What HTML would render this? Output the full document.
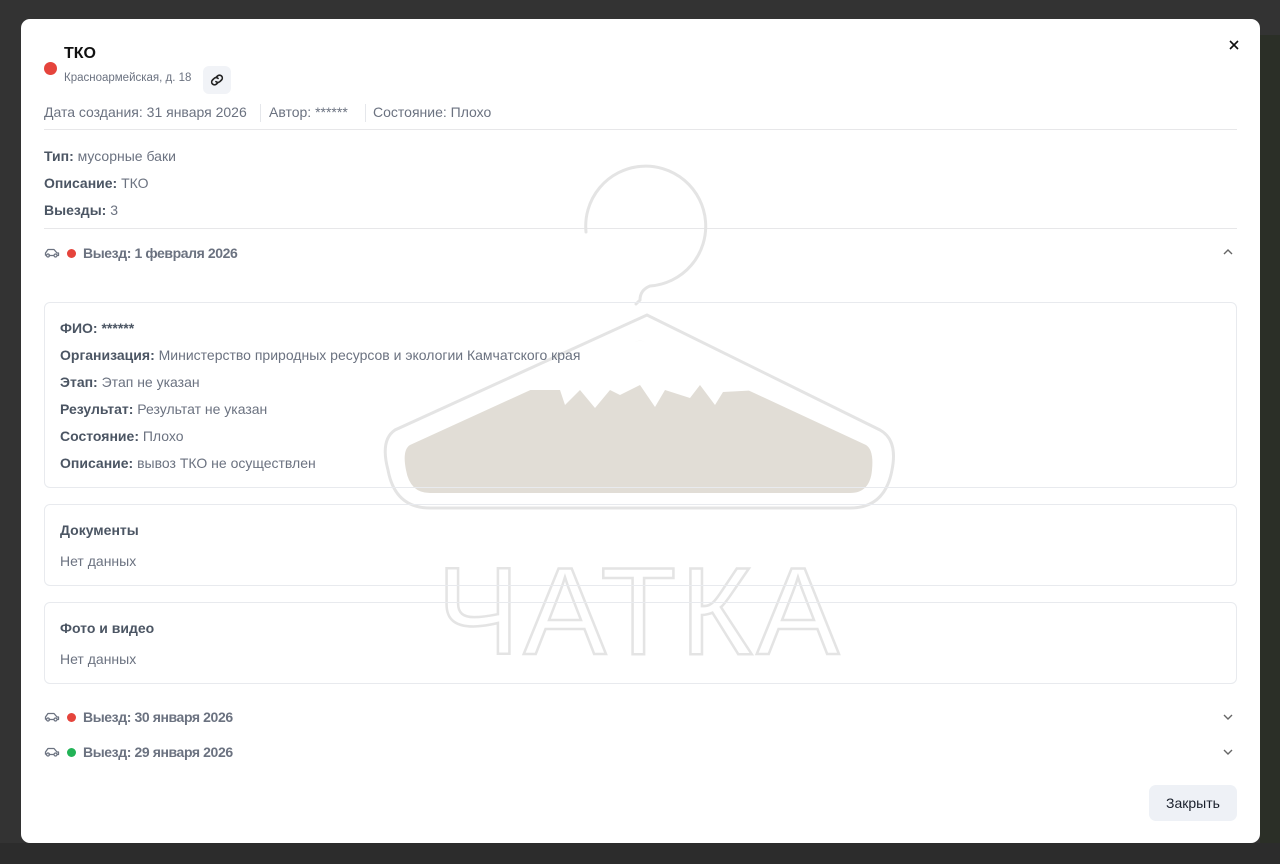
<!DOCTYPE html>
<html><head><meta charset="utf-8"><style>
*{margin:0;padding:0;box-sizing:border-box}
body{width:1280px;height:864px;background:#333;position:relative;overflow:hidden;font-family:"Liberation Sans",Arial,sans-serif;color:#6b7280;font-size:14px}
.a{position:absolute;white-space:nowrap}
.modal{position:absolute;left:21px;top:19px;width:1239px;height:824px;background:#fff;border-radius:9px;overflow:hidden}
b{color:#4b5563;font-weight:bold}
.v{color:#6b7280;font-weight:bold;letter-spacing:-0.4px}
.card{position:absolute;left:23px;width:1193px;border:1px solid #e8eaee;border-radius:6px}
.hr{position:absolute;left:23px;width:1193px;height:1px;background:#e7e7e9}
.dot{position:absolute;width:9px;height:9px;border-radius:50%}
</style></head><body>
<div style="position:absolute;left:1260px;top:35px;width:20px;height:829px;background:#2b2f27"></div>
<div style="position:absolute;left:0;top:843px;width:1280px;height:21px;background:#2c2c2c"></div>
<div class="modal">
<div class="dot" style="left:23px;top:43px;width:13px;height:13px;background:#e5443c"></div>
<div class="a" style="left:43px;top:26px;font-size:16px;font-weight:bold;color:#111">ТКО</div>
<div class="a" style="left:43px;top:53px;font-size:11.5px;color:#6b7280">Красноармейская, д. 18</div>
<div class="a" style="left:182px;top:47px;width:28px;height:28px;background:#f1f3f7;border-radius:6px">
<svg width="28" height="28" viewBox="0 0 28 28"><g fill="none" stroke="#222" stroke-width="1.6" stroke-linecap="round"><path d="M13 11.5l1.5-1.5a2.8 2.8 0 0 1 4 4l-1.6 1.6a2.8 2.8 0 0 1-4 0"/><path d="M15 16.5l-1.5 1.5a2.8 2.8 0 0 1-4-4l1.6-1.6a2.8 2.8 0 0 1 4 0"/></g></svg></div>
<div class="a" style="left:23px;top:85px">Дата создания: 31 января 2026</div>
<div class="a" style="left:239px;top:85px;width:1px;height:18px;background:#e5e7eb"></div>
<div class="a" style="left:248px;top:85px">Автор: ******</div>
<div class="a" style="left:344px;top:85px;width:1px;height:18px;background:#e5e7eb"></div>
<div class="a" style="left:352px;top:85px">Состояние: Плохо</div>
<div class="hr" style="top:110px"></div>
<div class="a" style="left:23px;top:129px"><b>Тип:</b> мусорные баки</div>
<div class="a" style="left:23px;top:156px"><b>Описание:</b> ТКО</div>
<div class="a" style="left:23px;top:183px"><b>Выезды:</b> 3</div>
<div class="hr" style="top:209px"></div>

<svg class="a" style="left:0;top:0" width="1239" height="824" viewBox="21 19 1239 824">
<g fill="none" stroke="#e4e4e4" stroke-width="3" stroke-linecap="round">
<path d="M586 232 A60 60 0 1 1 650 286 Q640 290 640 300 L636 304"/>
<path d="M647 315 L395 430 Q380 440 388 470 Q395 508 430 508 L850 508 Q885 508 892 470 Q898 440 880 430 Z"/>
</g>
<path d="M640 340 L410 445 Q402 450 406 470 Q410 493 430 493 L850 493 Q870 493 872 470 Q874 450 866 445 Z" fill="#e1ddd6"/>
<path d="M640 340 L520 390 L560 390 L565 405 L580 390 L595 408 L610 390 L620 395 L640 385 L655 407 L665 390 L690 398 L700 385 L715 405 L723 392 L760 390 Z" fill="#fff"/>
<text x="640" y="654" text-anchor="middle" font-family="Liberation Sans,sans-serif" font-size="124" fill="#fff" stroke="#e4e4e4" stroke-width="2.5" letter-spacing="4">ЧАТКА</text>
</svg>

<svg class="a" style="left:23px;top:228px" width="16" height="12" viewBox="0 0 16 12"><path d="M1.5 8.5V6l2.5-3.5h6L13 6h1.5v2.5H13M4.5 8.5h5M1.5 8.5H3" fill="none" stroke="#6b7280" stroke-width="1.3" stroke-linejoin="round"/><circle cx="4" cy="8.5" r="1.5" fill="none" stroke="#6b7280" stroke-width="1.2"/><circle cx="11.5" cy="8.5" r="1.5" fill="none" stroke="#6b7280" stroke-width="1.2"/></svg>
<div class="dot" style="left:46px;top:230px;background:#e5443c"></div>
<div class="a v" style="left:62px;top:226px">Выезд: 1 февраля 2026</div>
<svg class="a" style="left:1200px;top:228px" width="14" height="10"><path d="M3 7l4-4 4 4" fill="none" stroke="#666" stroke-width="1.4"/></svg>

<div class="card" style="top:283px;height:186px"></div>
<div class="a" style="left:39px;top:301px"><b>ФИО:</b> <b>******</b></div>
<div class="a" style="left:39px;top:328px"><b>Организация:</b> Министерство природных ресурсов и экологии Камчатского края</div>
<div class="a" style="left:39px;top:355px"><b>Этап:</b> Этап не указан</div>
<div class="a" style="left:39px;top:382px"><b>Результат:</b> Результат не указан</div>
<div class="a" style="left:39px;top:409px"><b>Состояние:</b> Плохо</div>
<div class="a" style="left:39px;top:436px"><b>Описание:</b> вывоз ТКО не осуществлен</div>

<div class="card" style="top:485px;height:82px"></div>
<div class="a" style="left:39px;top:503px"><b>Документы</b></div>
<div class="a" style="left:39px;top:534px">Нет данных</div>
<div class="card" style="top:583px;height:82px"></div>
<div class="a" style="left:39px;top:601px"><b>Фото и видео</b></div>
<div class="a" style="left:39px;top:632px">Нет данных</div>

<svg class="a" style="left:23px;top:692px" width="16" height="12" viewBox="0 0 16 12"><path d="M1.5 8.5V6l2.5-3.5h6L13 6h1.5v2.5H13M4.5 8.5h5M1.5 8.5H3" fill="none" stroke="#6b7280" stroke-width="1.3" stroke-linejoin="round"/><circle cx="4" cy="8.5" r="1.5" fill="none" stroke="#6b7280" stroke-width="1.2"/><circle cx="11.5" cy="8.5" r="1.5" fill="none" stroke="#6b7280" stroke-width="1.2"/></svg>
<div class="dot" style="left:46px;top:694px;background:#e5443c"></div>
<div class="a v" style="left:62px;top:690px">Выезд: 30 января 2026</div>
<svg class="a" style="left:1200px;top:693px" width="14" height="10"><path d="M3 3l4 4 4-4" fill="none" stroke="#666" stroke-width="1.4"/></svg>

<svg class="a" style="left:23px;top:727px" width="16" height="12" viewBox="0 0 16 12"><path d="M1.5 8.5V6l2.5-3.5h6L13 6h1.5v2.5H13M4.5 8.5h5M1.5 8.5H3" fill="none" stroke="#6b7280" stroke-width="1.3" stroke-linejoin="round"/><circle cx="4" cy="8.5" r="1.5" fill="none" stroke="#6b7280" stroke-width="1.2"/><circle cx="11.5" cy="8.5" r="1.5" fill="none" stroke="#6b7280" stroke-width="1.2"/></svg>
<div class="dot" style="left:46px;top:729px;background:#22b357"></div>
<div class="a v" style="left:62px;top:725px">Выезд: 29 января 2026</div>
<svg class="a" style="left:1200px;top:728px" width="14" height="10"><path d="M3 3l4 4 4-4" fill="none" stroke="#666" stroke-width="1.4"/></svg>

<svg class="a" style="left:1206px;top:19px" width="14" height="14"><path d="M3 3l8 8M11 3l-8 8" stroke="#111" stroke-width="1.6"/></svg>
<div class="a" style="left:1128px;top:766px;width:88px;height:36px;background:#eef1f6;border-radius:7px;color:#1a202c;font-size:14px;line-height:36px;text-align:center">Закрыть</div>
</div>
</body></html>
